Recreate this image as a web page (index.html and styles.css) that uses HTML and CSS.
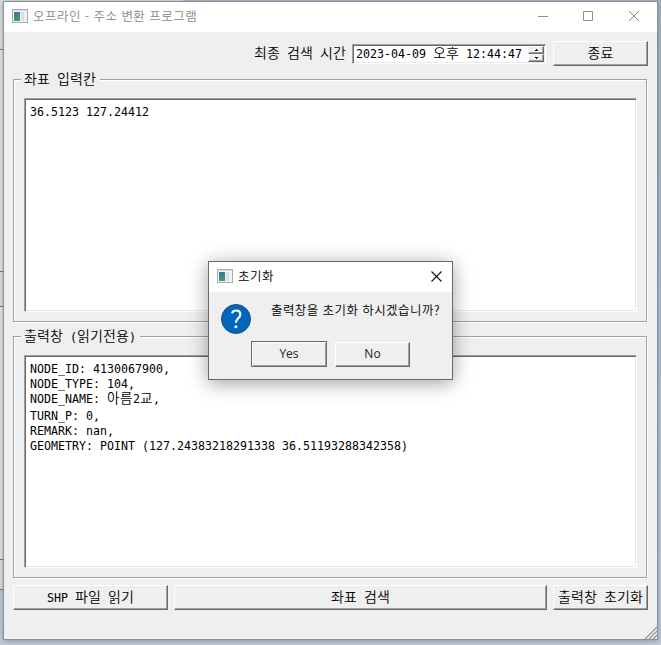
FILE: index.html
```html
<!DOCTYPE html>
<html lang="ko">
<head>
<meta charset="utf-8">
<title>오프라인 - 주소 변환 프로그램</title>
<link rel="stylesheet" href="styles.css">
</head>
<body>
<div class="behind"><i class="b1"></i><i class="b2"></i><i class="b3"></i><i class="b4"></i></div>
<main class="window">
  <header class="titlebar">
    <svg class="appicon" width="16" height="14" viewBox="0 0 16 14"><use href="#app"/></svg>
    <h1>오프라인 - 주소 변환 프로그램</h1>
    <svg class="controls" width="103" height="12" viewBox="0 0 103 12" fill="none" stroke="#8f8f8f">
      <path d="M0 6.500h10M45.500 1.500h9v9h-9zM91 1l10 10M101 1l-10 10"/>
    </svg>
  </header>
  <div class="content">
    <div class="toprow">
      <label><span class="k">최종</span> <span class="k">검색</span> <span class="k">시간</span></label>
      <div class="datetime sunken">
        <span class="value">2023-04-09 <span class="k">오후</span> 12:44:47</span>
        <span class="spin">
          <span class="step"><svg width="3" height="2"><path d="M0 2V1h1V0h1v1h1v1z"/></svg></span>
          <span class="step"><svg width="3" height="2"><path d="M0 0v1h1v1h1V1h1V0z"/></svg></span>
        </span>
      </div>
      <button class="btn"><span class="k">종료</span></button>
    </div>
    <section class="group">
      <h2><span class="k">좌표</span> <span class="k">입력칸</span></h2>
      <div class="edit sunken"><p>36.5123 127.24412</p></div>
    </section>
    <section class="group second">
      <h2><span class="k">출력창</span> (<span class="k">읽기전용</span>)</h2>
      <div class="edit sunken">
        <p>NODE_ID: 4130067900,</p>
        <p>NODE_TYPE: 104,</p>
        <p class="tall">NODE_NAME: <span class="k">아름</span>2<span class="k">교</span>,</p>
        <p>TURN_P: 0,</p>
        <p>REMARK: nan,</p>
        <p>GEOMETRY: POINT (127.24383218291338 36.51193288342358)</p>
      </div>
    </section>
    <div class="actions">
      <button class="btn">SHP <span class="k">파일</span> <span class="k">읽기</span></button>
      <button class="btn"><span class="k">좌표</span> <span class="k">검색</span></button>
      <button class="btn"><span class="k">출력창</span> <span class="k">초기화</span></button>
    </div>
  </div>
  <svg class="grip" width="13" height="13" viewBox="0 0 13 13" fill="none">
    <path stroke="#fff" d="M0 12L12 0M4 12l8-8M8 12l4-4"/>
    <path stroke="#999" stroke-width="1.500" d="M1 13L13 1M5 13l8-8M9 13l4-4"/>
  </svg>
</main>
<div class="dialog" role="dialog">
  <header class="titlebar">
    <svg class="appicon" width="16" height="14" viewBox="0 0 16 14">
      <defs>
        <linearGradient id="g" x2="0" y2="1"><stop stop-color="#3f72a0"/><stop offset="1" stop-color="#469a6c"/></linearGradient>
        <g id="app"><path fill="#a5adb0" d="M0 0h16v14H0z"/><path fill="#f2f4f4" d="M1 2h14v11H1z"/><path fill="#d4dadd" d="M1 1h14v1H1z"/><path fill="url(#g)" d="M2 3h6v9H2z"/><path fill="#d5e1df" d="M9 3h3v9H9z"/><path fill="#e9eceb" d="M13 3h1v9h-1z"/></g>
      </defs>
      <use href="#app"/>
    </svg>
    <h1>초기화</h1>
    <svg class="close" width="11" height="11" viewBox="0 0 11 11" fill="none" stroke="#111" stroke-width="1.100"><path d="M.5.5l10 10M10.500.5l-10 10"/></svg>
  </header>
  <div class="message">
    <svg width="30" height="30" viewBox="0 0 30 30"><circle cx="15" cy="15" r="14.500" fill="#0067c0" stroke="#174d80"/><path d="M10.900 9.300c.8-1.900 2.300-2.800 4.200-2.800 2.500 0 4.200 1.500 4.200 3.900 0 3.800-4.400 4-4.400 8.400" fill="none" stroke="#fff" stroke-width="2.200"/><circle cx="14.900" cy="22.700" r="1.500" fill="#fff"/></svg>
    <p>출력창을 초기화 하시겠습니까?</p>
  </div>
  <div class="choices">
    <button class="btn default">Yes</button>
    <button class="btn">No</button>
  </div>
</div>
</body>
</html>
```
FILE: styles.css
```css
* { box-sizing: border-box; }
body {
  margin: 0;
  width: 661px;
  height: 645px;
  overflow: hidden;
  position: relative;
  background: linear-gradient(#a9b6c8, #b3bfcd 50%, #c3ccd8);
  font-family: "DejaVu Sans Mono", "Noto Sans CJK KR", monospace;
  font-size: 11.63px;
  color: #000;
}
h1, h2, p { margin: 0; font-weight: 400; }
.behind {
  position: absolute;
  left: 0;
  top: 0;
  width: 183px;
  height: 590px;
  background: #dedede;
  border-bottom: 1px solid #777;
  display: flex;
  flex-direction: column;
}
.behind i { border-bottom: 1px solid #777; }
.b1 { height: 50px; }
.b2 { height: 222px; background: #e6e6e6; }
.b3 { height: 35px; }
.b4 { height: 253px; background: #e6e6e6; }
.window {
  position: absolute;
  left: 3px;
  top: 1px;
  width: 655px;
  height: 639px;
  background: #efefef;
  border: 1px solid #8b919b;
  box-shadow: 0 1px 5px rgba(40, 55, 75, .4);
}
.titlebar {
  display: flex;
  align-items: center;
  height: 30px;
  padding: 0 0 2px 8px;
  background: #fff;
}
.titlebar h1 {
  font: 350 12.5px/20px "Noto Sans CJK KR", sans-serif;
  letter-spacing: .46px;
  margin-left: 5px;
  white-space: nowrap;
}
.window > .titlebar h1 { color: #888; }
.controls { margin-left: auto; margin-right: 16px; }
.content { padding: 9px 9px 0; }
.k {
  font-family: "Noto Sans CJK KR", sans-serif;
  font-weight: 350;
  font-size: 14px;
  line-height: 1px;
  letter-spacing: .12px;
}
.toprow {
  display: flex;
  align-items: center;
  justify-content: flex-end;
  height: 25px;
}
.toprow label { margin-right: 6px; white-space: nowrap; }
.sunken {
  background: #fff;
  border: 1px solid;
  border-color: #a0a0a0 #fff #fff #a0a0a0;
  box-shadow: inset 1px 1px #696969, inset -1px -1px #e9e9e9;
}
.datetime {
  width: 194px;
  height: 20px;
  display: flex;
  align-items: center;
  justify-content: space-between;
  padding: 2px 1px 2px 3px;
  margin-right: 7px;
  white-space: nowrap;
}
.spin { width: 16px; height: 16px; display: flex; flex-direction: column; }
.step {
  flex: 1;
  display: flex;
  align-items: center;
  justify-content: center;
  background: #efefef;
  border: 1px solid;
  border-color: #fff #696969 #696969 #fff;
  box-shadow: inset -1px -1px #a0a0a0;
}
.btn {
  font: inherit;
  line-height: 18px;
  padding: 0;
  color: #000;
  background: #efefef;
  border: 1px solid;
  border-color: #fff #696969 #696969 #fff;
  box-shadow: inset -1px -1px #a0a0a0;
  border-radius: 0;
  height: 25px;
  white-space: nowrap;
}
.toprow .btn { width: 95px; }
.group {
  height: 243px;
  margin: 13px 1px 0 0;
  padding: 0 9px 9px 10px;
  border: 1px solid #a0a0a0;
  box-shadow: 1px 1px #fff, inset 1px 1px #fff;
  display: flex;
  flex-direction: column;
}
.group.second { margin-top: 14px; height: 242px; }
.group h2 {
  font-size: inherit;
  align-self: flex-start;
  height: 18px;
  line-height: 18px;
  margin: -9px 0 9px -3px;
  padding: 0 4px 0 3px;
  background: #efefef;
  white-space: nowrap;
}
.edit { flex: 1; padding: 6px 5px; }
.edit p { height: 15px; line-height: 15px; white-space: pre; }
.edit .tall { height: 17px; }
.edit .k { font-size: 13.5px; letter-spacing: .58px; }
.actions {
  display: grid;
  grid-template-columns: 155px 373px 95px;
  column-gap: 6px;
  margin-top: 7px;
}
.grip { position: absolute; right: 0; bottom: 0; }
.dialog {
  position: absolute;
  left: 208px;
  top: 261px;
  width: 245px;
  height: 119px;
  background: #efefef;
  border: 1px solid #686868;
  box-shadow: 0 3px 18px rgba(0, 0, 0, .38);
  font-family: "Open Sans", "Noto Sans CJK KR", sans-serif;
  font-size: 12px;
}
.close { margin-left: auto; margin-right: 10px; }
.message {
  display: flex;
  padding: 12px 0 0 12px;
  height: 49px;
}
.message p {
  margin-left: 20px;
  line-height: 12px;
  font-family: "Noto Sans CJK KR", sans-serif;
  font-weight: 350;
  font-size: 12.5px;
  letter-spacing: .42px;
  white-space: nowrap;
}
.choices { display: flex; align-items: center; padding-left: 42px; gap: 8px; }
.choices .btn { width: 75px; color: #222; }
.choices .default {
  width: 76px;
  height: 26px;
  border-color: #696969;
  box-shadow: inset 1px 1px #fff, inset -1px -1px #a0a0a0;
}
```
